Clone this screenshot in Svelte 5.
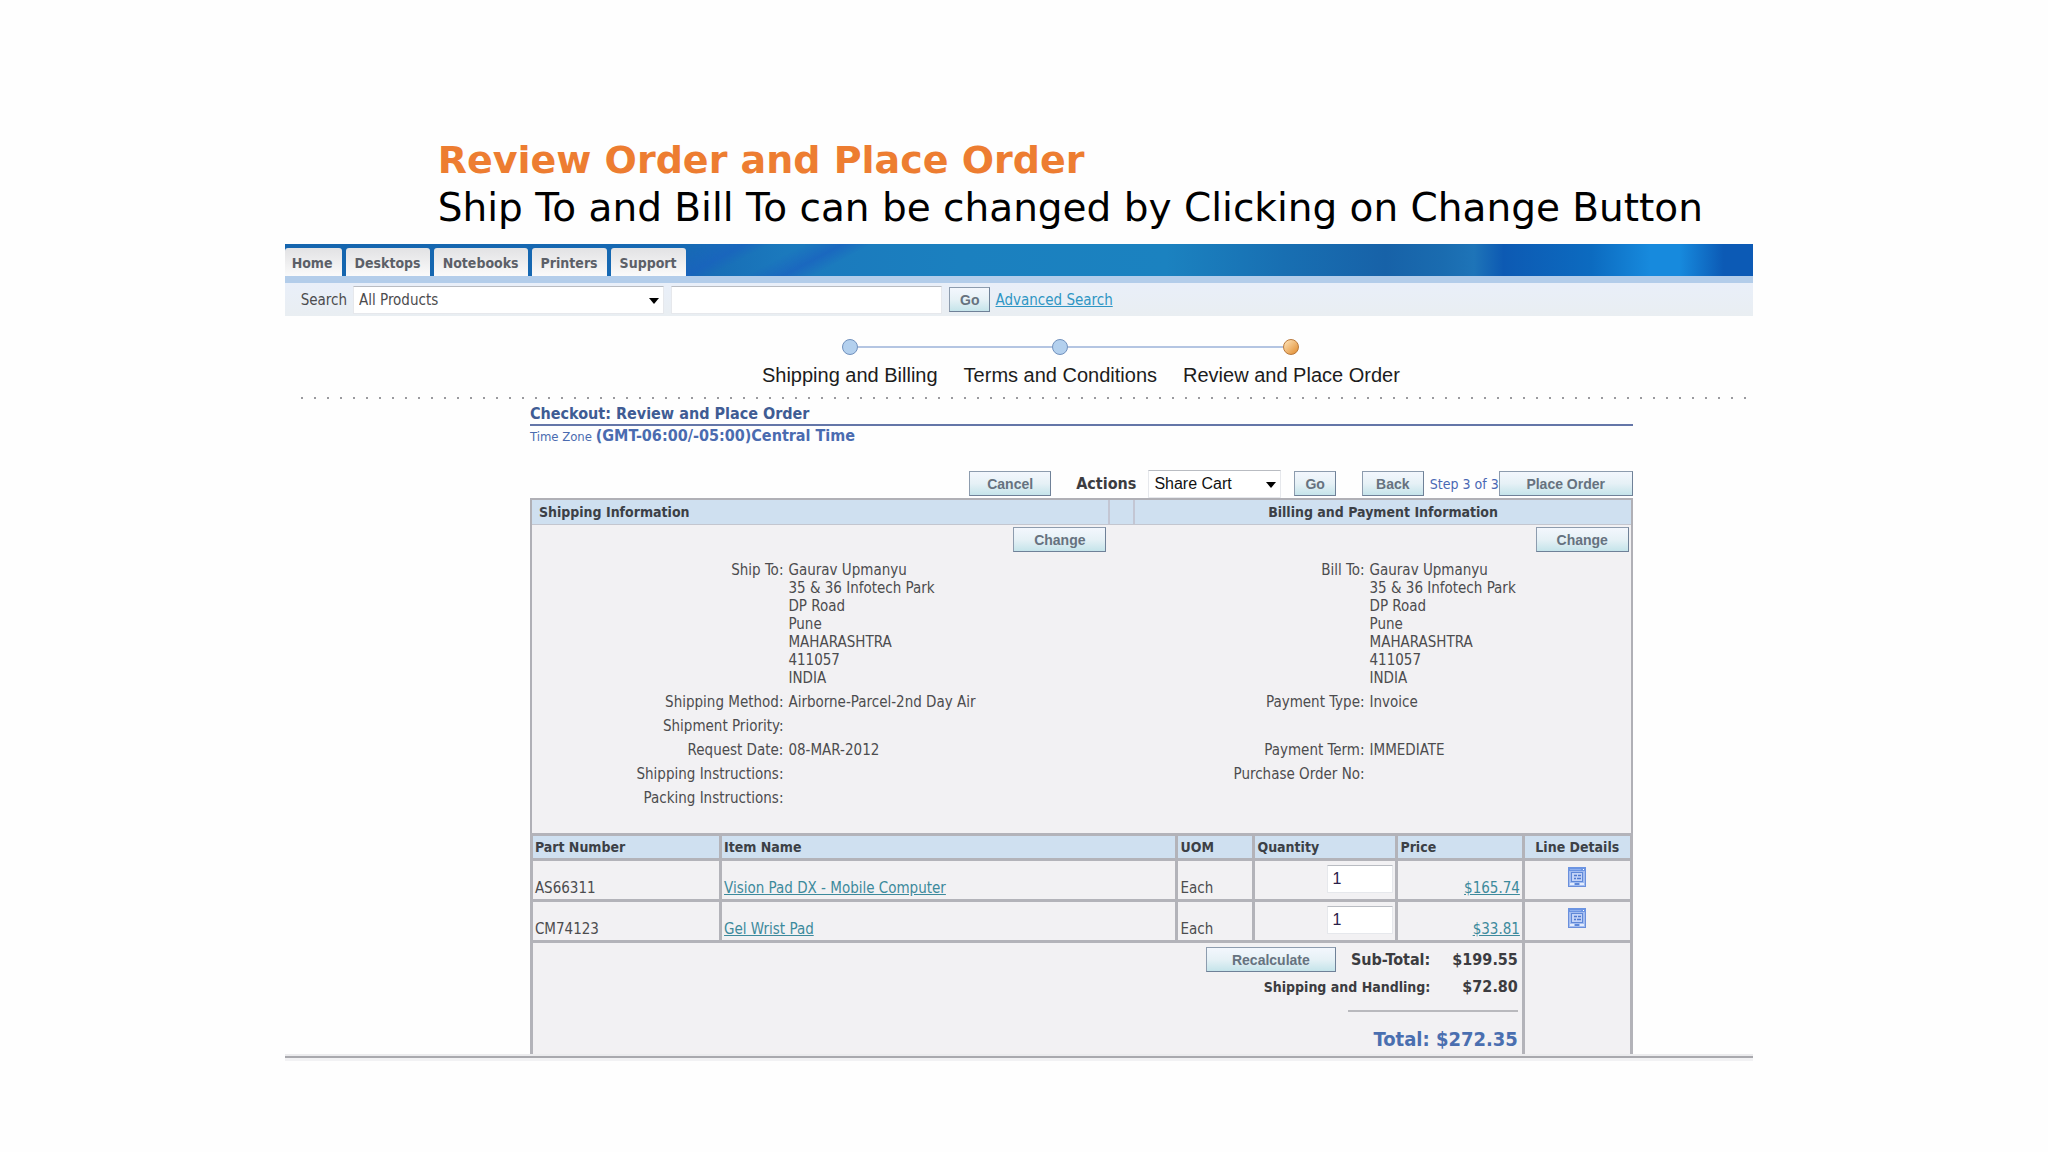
<script>
  const tabs = ['Home', 'Desktops', 'Notebooks', 'Printers', 'Support'];

  const steps = [
    { label: 'Shipping and Billing', current: false },
    { label: 'Terms and Conditions', current: false },
    { label: 'Review and Place Order', current: true }
  ];

  const address = ['Gaurav Upmanyu', '35 & 36 Infotech Park', 'DP Road', 'Pune', 'MAHARASHTRA', '411057', 'INDIA'];

  const shipping = [
    { label: 'Ship To:', lines: address },
    { label: 'Shipping Method:', lines: ['Airborne-Parcel-2nd Day Air'] },
    { label: 'Shipment Priority:', lines: [] },
    { label: 'Request Date:', lines: ['08-MAR-2012'] },
    { label: 'Shipping Instructions:', lines: [] },
    { label: 'Packing Instructions:', lines: [] }
  ];

  const billing = [
    { label: 'Bill To:', lines: address },
    { label: 'Payment Type:', lines: ['Invoice'] },
    { label: '', lines: [] },
    { label: 'Payment Term:', lines: ['IMMEDIATE'] },
    { label: 'Purchase Order No:', lines: [] }
  ];

  let items = $state([
    { part: 'AS66311', name: 'Vision Pad DX - Mobile Computer', uom: 'Each', quantity: '1', price: '$165.74' },
    { part: 'CM74123', name: 'Gel Wrist Pad', uom: 'Each', quantity: '1', price: '$33.81' }
  ]);
</script>

{#snippet details(rows)}
  <dl class="details">
    {#each rows as row}
      <dt>{row.label}</dt>
      <dd>
        {#each row.lines as line}
          <div>{line}</div>
        {/each}
      </dd>
    {/each}
  </dl>
{/snippet}

<main class="slide">
  <header class="intro">
    <h1>Review Order and Place Order</h1>
    <p>Ship To and Bill To can be changed by Clicking on Change Button</p>
  </header>

  <div class="store">
    <nav class="tabs">
      {#each tabs as tab}
        <a class="tab" href="#{tab.toLowerCase()}">{tab}</a>
      {/each}
    </nav>

    <form class="search">
      <label for="category">Search</label>
      <span class="select category">
        <select id="category">
          <option>All Products</option>
        </select>
      </span>
      <input class="query" type="text" aria-label="Search text" />
      <button class="btn" type="button">Go</button>
      <a class="advanced" href="#advanced">Advanced Search</a>
    </form>

    <ol class="steps">
      {#each steps as step}
        <li>
          <span class="track"><span class="dot" class:current={step.current}></span></span>
          <span class="step-label">{step.label}</span>
        </li>
      {/each}
    </ol>

    <div class="dots"></div>

    <section class="checkout">
      <h2>Checkout: Review and Place Order</h2>
      <p class="zone">Time Zone <strong>(GMT-06:00/-05:00)Central Time</strong></p>

      <div class="actions">
        <button class="btn cancel" type="button">Cancel</button>
        <label for="action">Actions</label>
        <span class="select action">
          <select id="action">
            <option>Share Cart</option>
          </select>
        </span>
        <button class="btn go" type="button">Go</button>
        <button class="btn back" type="button">Back</button>
        <span class="step-count">Step 3 of 3</span>
        <button class="btn place" type="button">Place Order</button>
      </div>

      <div class="panel">
        <div class="panel-head">
          <h3>Shipping Information</h3>
          <span></span>
          <h3 class="billing-title">Billing and Payment Information</h3>
        </div>
        <div class="panel-body">
          <div class="side">
            <button class="btn change" type="button">Change</button>
            {@render details(shipping)}
          </div>
          <div class="side billing">
            <button class="btn change" type="button">Change</button>
            {@render details(billing)}
          </div>
        </div>
      </div>

      <table class="cart">
        <colgroup>
          <col class="c-part" />
          <col class="c-name" />
          <col class="c-uom" />
          <col class="c-qty" />
          <col class="c-price" />
          <col />
        </colgroup>
        <thead>
          <tr>
            <th>Part Number</th>
            <th>Item Name</th>
            <th>UOM</th>
            <th>Quantity</th>
            <th>Price</th>
            <th class="center">Line Details</th>
          </tr>
        </thead>
        <tbody>
          {#each items as item}
            <tr>
              <td>{item.part}</td>
              <td><a href="#item">{item.name}</a></td>
              <td>{item.uom}</td>
              <td class="quantity">
                <input type="text" aria-label="Quantity of {item.name}" bind:value={item.quantity} />
              </td>
              <td class="price"><a href="#price">{item.price}</a></td>
              <td class="icon">
                <button type="button" aria-label="Line details for {item.name}">
                  <svg width="18" height="20" viewBox="0 0 18 20">
                    <rect x="0.5" y="0.5" width="17" height="19" fill="#a4bdf0" stroke="#6a8fdc" />
                    <rect x="0" y="0" width="18" height="4" fill="#6c94e2" />
                    <path d="M2 2.5h11" stroke="#8fb0ee" />
                    <path d="M15 2.5h1" stroke="#fff" />
                    <rect x="3.5" y="5.5" width="11" height="9" fill="#c3d3f7" stroke="#5f88d8" />
                    <path d="M6 8.5h3M10 8.5h3M6 11.5h2M9 11.5h4" stroke="#5079cf" stroke-width="1.5" />
                    <path d="M2 17h4M12 17h4" stroke="#e3ecfd" stroke-width="2" />
                    <path d="M7 17h4" stroke="#5f88d8" stroke-width="2" />
                  </svg>
                </button>
              </td>
            </tr>
          {/each}
        </tbody>
        <tfoot>
          <tr>
            <td colspan="5">
              <div class="totals">
                <div class="labels">
                  <button class="btn recalculate" type="button">Recalculate</button>
                  <strong>Sub-Total:</strong>
                </div>
                <strong>$199.55</strong>
                <strong class="handling">Shipping and Handling:</strong>
                <strong>$72.80</strong>
              </div>
              <div class="rule"></div>
              <div class="grand">Total: $272.35</div>
            </td>
            <td></td>
          </tr>
        </tfoot>
      </table>
    </section>
    <div class="frame-end"></div>
  </div>
</main>

<style>
  :global(body) {
    margin: 0;
    background: #fefefe;
  }

  .slide {
    padding: 137px 14.4% 90px 13.9%;
    font: 15px/18px 'DejaVu Sans Condensed', 'DejaVu Sans', sans-serif;
    color: #4c4c4e;
  }

  h1,
  h2,
  h3,
  p,
  ol,
  dl,
  dd {
    margin: 0;
    padding: 0;
  }

  .intro {
    padding-left: 153px;
    font-family: 'DejaVu Sans', sans-serif;
    font-size: 39px;
    line-height: 47px;
    white-space: nowrap;
    color: #000;
  }

  .intro h1 {
    font-size: 38px;
    color: #ed7d31;
  }

  .store {
    margin-top: 13px;
  }

  /* Top bar */
  .tabs {
    display: flex;
    gap: 4px;
    height: 28px;
    padding-top: 4px;
    border-bottom: 7px solid #b3cdea;
    background:
      linear-gradient(152deg, transparent 190px, #1a5fc099 216px, transparent 228px 244px, #1a5fc0aa 262px, transparent 276px),
      linear-gradient(90deg, #1565ae 0%, #1669b3 27%, #1b79bd 34%, #1b80bf 46%, #1b82c0 60%, #186fb2 68%, #1762a8 75%, #1a6cb0 79%, #1e74b8 81%, #0d5ab3 83%, #0c6bc0 89%, #178add 93%, #178add 95%, #0c5ab5 98%);
  }

  .tab {
    padding: 0 9px;
    border-radius: 3px 3px 0 0;
    background: linear-gradient(#e2e2e4, #fafafa);
    font-size: 14px;
    font-weight: bold;
    line-height: 30px;
    color: #5c6068;
    text-decoration: none;
  }

  .tab:first-child {
    padding-left: 7px;
  }

  .search {
    display: flex;
    align-items: center;
    height: 33px;
    padding-left: 16px;
    background: linear-gradient(#e9eff9, #e9eef2);
  }

  input,
  select {
    box-sizing: border-box;
    border: 1px solid #e6e8ec;
    border-top-color: #b9bcc2;
    border-radius: 0;
    background: #fff;
    outline: none;
  }

  .select {
    position: relative;
    display: block;
  }

  .select::after {
    content: '';
    position: absolute;
    right: 5px;
    top: 12px;
    border: 5px solid transparent;
    border-top: 6px solid #000;
    border-bottom: 0;
    pointer-events: none;
  }

  select {
    appearance: none;
    width: 100%;
    height: 28px;
    padding: 0 5px;
    font: inherit;
    color: inherit;
  }

  .category {
    width: 311px;
    margin-left: 6px;
  }

  .query {
    width: 271px;
    height: 28px;
    margin: 0 7px;
  }

  .btn {
    box-sizing: border-box;
    height: 25px;
    padding: 0 10px;
    border: 1px solid #8d9cae;
    border-right-color: #6f8198;
    border-bottom-color: #6f8198;
    background: linear-gradient(#f3f7fd, #e6f1f6 50%, #c5e4ea);
    font: bold 14px/20px 'Liberation Sans', Arial, sans-serif;
    color: #66727f;
    white-space: nowrap;
  }

  .advanced {
    margin-left: 5px;
    color: #2f96c4;
  }

  /* Checkout progress */
  .steps {
    display: flex;
    justify-content: center;
    padding: 23px 0 0 124px;
    font: 20px/24px 'Liberation Sans', Arial, sans-serif;
    color: #1c1c1c;
    list-style: none;
  }

  .track {
    display: flex;
    align-items: center;
  }

  .track::before,
  .track::after {
    content: '';
    flex: 1;
    height: 2px;
    background: #b4c5e2;
  }

  li:first-child .track::before,
  li:last-child .track::after {
    background: none;
  }

  .dot {
    box-sizing: border-box;
    width: 16px;
    height: 16px;
    border: 1px solid #7191bd;
    border-radius: 50%;
    background: #b3d0ee;
  }

  .dot.current {
    border-color: #b9783a;
    background: linear-gradient(135deg, #ffe6bd, #e08a2c);
  }

  .step-label {
    display: block;
    padding: 8px 13px 0;
  }

  .dots {
    height: 2px;
    margin: 10px 0 0 16px;
    background: repeating-linear-gradient(90deg, #9a9a9e 0 2px, transparent 2px 13px);
  }

  .checkout {
    margin: 0 8.2% 0 16.7%;
  }

  h2 {
    padding-top: 4px;
    border-bottom: 2px solid #6476a8;
    font-size: 16px;
    line-height: 21px;
    color: #3f5c94;
  }

  .zone {
    font-size: 13px;
    line-height: 20px;
    color: #4a6bb0;
  }

  .zone strong {
    font-size: 16px;
  }

  /* Order actions */
  .actions {
    display: flex;
    align-items: center;
    justify-content: flex-end;
    height: 29px;
    margin-top: 22px;
  }

  .actions label {
    margin: 0 12px 0 25px;
    font-size: 16px;
    font-weight: bold;
    color: #3c3c40;
  }

  .action {
    width: 133px;
    font: 16px/20px 'Liberation Sans', Arial, sans-serif;
    color: #111;
  }

  .cancel {
    width: 82px;
  }

  .go {
    margin: 0 26px 0 13px;
  }

  .back {
    width: 62px;
  }

  .step-count {
    margin-left: 6px;
    font-size: 14px;
    color: #4a68b4;
  }

  .place {
    width: 134px;
  }

  /* Shipping and billing */
  .panel {
    border: 2px solid #b0b0b6;
    border-bottom: 0;
    background: #f2f1f3;
  }

  .panel-head {
    display: grid;
    grid-template-columns: 575fr 25fr 496fr;
    border-bottom: 1px solid #c3c6cf;
    background: #cfe0f0;
  }

  .panel-head span,
  .billing-title {
    border-left: 2px solid #c3c6d3;
  }

  h3 {
    padding: 0 7px;
    font-size: 14px;
    line-height: 24px;
    color: #3c4046;
  }

  .billing-title {
    text-align: center;
  }

  .panel-body {
    display: grid;
    grid-template-columns: 575fr 521fr;
    padding-bottom: 26px;
  }

  .side {
    padding: 2px 2px 0 0;
  }

  .change {
    display: block;
    width: 93px;
    margin-left: auto;
  }

  .details {
    display: grid;
    grid-template-columns: 254fr 321fr;
    column-gap: 5px;
    row-gap: 6px;
    padding-top: 9px;
  }

  .billing .details {
    grid-template-columns: 259fr 262fr;
  }

  dt {
    min-height: 18px;
    text-align: right;
  }

  /* Cart lines */
  .cart {
    width: 100%;
    table-layout: fixed;
    border-collapse: collapse;
    background: #f2f1f3;
  }

  .c-part {
    width: 17.2%;
  }

  .c-name {
    width: 41.5%;
  }

  .c-uom {
    width: 7%;
  }

  .c-qty {
    width: 13%;
  }

  .c-price {
    width: 11.5%;
  }

  th,
  td {
    padding: 0 2px;
    border: 3px solid #b3b3b9;
    text-align: left;
  }

  th {
    height: 22px;
    background: #cfe0f0;
    font-size: 14px;
    color: #3c4046;
  }

  .cart .center,
  .icon {
    text-align: center;
  }

  tbody td {
    height: 36px;
    padding-bottom: 2px;
    vertical-align: bottom;
  }

  .cart a {
    color: #3d8a9c;
  }

  .cart .quantity {
    vertical-align: middle;
  }

  .quantity input {
    display: block;
    width: 66px;
    height: 28px;
    margin-left: auto;
    padding: 0 4px;
    font: 16px/20px 'Liberation Sans', Arial, sans-serif;
    color: #2a2048;
  }

  .price {
    text-align: right;
  }

  .cart .icon {
    vertical-align: top;
  }

  .icon button {
    padding: 6px 0 0;
    border: 0;
    background: none;
  }

  .icon svg {
    display: block;
  }

  tfoot td {
    padding: 4px 4px 0;
    border-bottom: 0;
    vertical-align: top;
  }

  .totals {
    display: grid;
    grid-template-columns: 1fr auto;
    align-items: center;
    column-gap: 22px;
    row-gap: 4px;
    font-size: 16px;
    line-height: 22px;
    text-align: right;
    color: #3c3c40;
  }

  .labels {
    display: flex;
    align-items: center;
    justify-content: flex-end;
    gap: 15px;
  }

  .recalculate {
    width: 130px;
  }

  .handling {
    font-size: 14px;
  }

  .rule {
    width: 170px;
    height: 2px;
    margin: 12px 0 0 auto;
    background: #b9b9bd;
  }

  .grand {
    padding: 15px 0 3px;
    font-size: 20px;
    font-weight: bold;
    line-height: 24px;
    text-align: right;
    color: #4a6fb0;
  }

  .frame-end {
    height: 2px;
    border-top: 2px solid #ececee;
    border-bottom: 3px solid #f2f2f4;
    background: #a9a9ae;
  }
</style>
